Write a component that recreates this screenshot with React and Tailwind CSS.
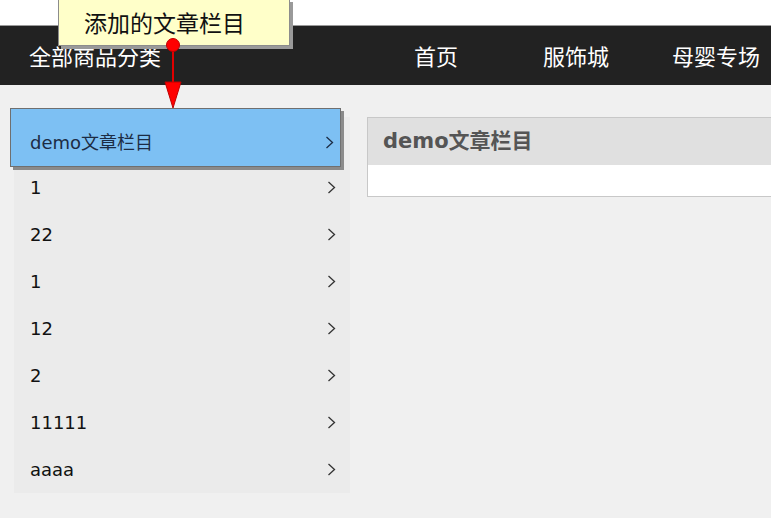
import React from "react";

const navItems = ["首页", "服饰城", "母婴专场"];
const categories = ["1", "22", "1", "12", "2", "11111", "aaaa"];

const font = { fontFamily: '"DejaVu Sans", "Noto Sans CJK SC", sans-serif' };

const Chevron = ({ color = "#333" }) => (
  <svg width="9" height="13" viewBox="0 0 9 13" className="shrink-0">
    <polyline points="1.5,1 7.5,6.5 1.5,12" fill="none" stroke={color} strokeWidth="1.3" />
  </svg>
);

const App = () => {
  return (
    <div
      className="relative w-[771px] h-[518px] overflow-hidden bg-[#f0f0f0]"
      style={font}
    >
      {/* top strip */}
      <div className="h-[26px] bg-white border-b border-[#9a9a9a]" />

      {/* nav bar */}
      <div className="h-[59px] bg-[#222] flex items-center text-[22px] text-white font-['Noto_Sans_CJK_SC',sans-serif]">
        <div className="w-[366px] shrink-0 pl-[29px]">全部商品分类</div>
        {navItems.map((item) => (
          <div key={item} className="w-[140px] shrink-0 text-center">
            {item}
          </div>
        ))}
      </div>

      {/* main */}
      <div className="flex items-start pt-[32px] pl-[14px] gap-[17px]">
        {/* sidebar */}
        <div className="w-[336px] shrink-0 bg-[#ebebeb]">
          <div className="relative h-[47px]">
            <div className="absolute left-[-4px] top-[-9px] w-[331px] h-[59px] bg-[#7dc0f3] border border-[#6f6f6f] shadow-[3px_3px_0_#8a8a8a] flex items-center justify-between pl-[19px] pr-[6px] pt-[10px] text-[18px] text-[#1c2c44]">
              <span>demo文章栏目</span>
              <Chevron color="#1c2c44" />
            </div>
          </div>
          {categories.map((c, i) => (
            <div
              key={i}
              className="h-[47px] flex items-center justify-between pl-[16px] pr-[14px] text-[18px] text-[#111]"
            >
              <span>{c}</span>
              <Chevron />
            </div>
          ))}
        </div>

        {/* right panel */}
        <div className="w-[420px] shrink-0 border border-[#c8c8c8] bg-white">
          <div className="h-[47px] bg-[#e0e0e0] flex items-center pl-[15px] text-[21px] font-bold text-[#555]">
            demo文章栏目
          </div>
          <div className="h-[31px]" />
        </div>
      </div>

      {/* callout */}
      <div className="absolute left-[58px] top-[-1px] w-[232px] h-[47px] bg-[#ffffc9] border border-[#8c8c8c] shadow-[3px_3px_0_#9a9a9a] flex items-center pl-[25px] text-[23px] text-[#111] font-['Noto_Sans_CJK_SC',sans-serif]">
        添加的文章栏目
      </div>
      <svg
        className="absolute left-[163px] top-[37px]"
        width="20"
        height="72"
        viewBox="0 0 20 72"
      >
        <line x1="10" y1="8" x2="10" y2="46" stroke="#e00000" strokeWidth="2" />
        <polygon points="2,45 18,45 10,71" fill="#ff0000" stroke="#c00000" strokeWidth="1" />
        <circle cx="10" cy="8" r="6.5" fill="#ff0000" stroke="#c00000" strokeWidth="1" />
      </svg>
    </div>
  );
};

export default App;
